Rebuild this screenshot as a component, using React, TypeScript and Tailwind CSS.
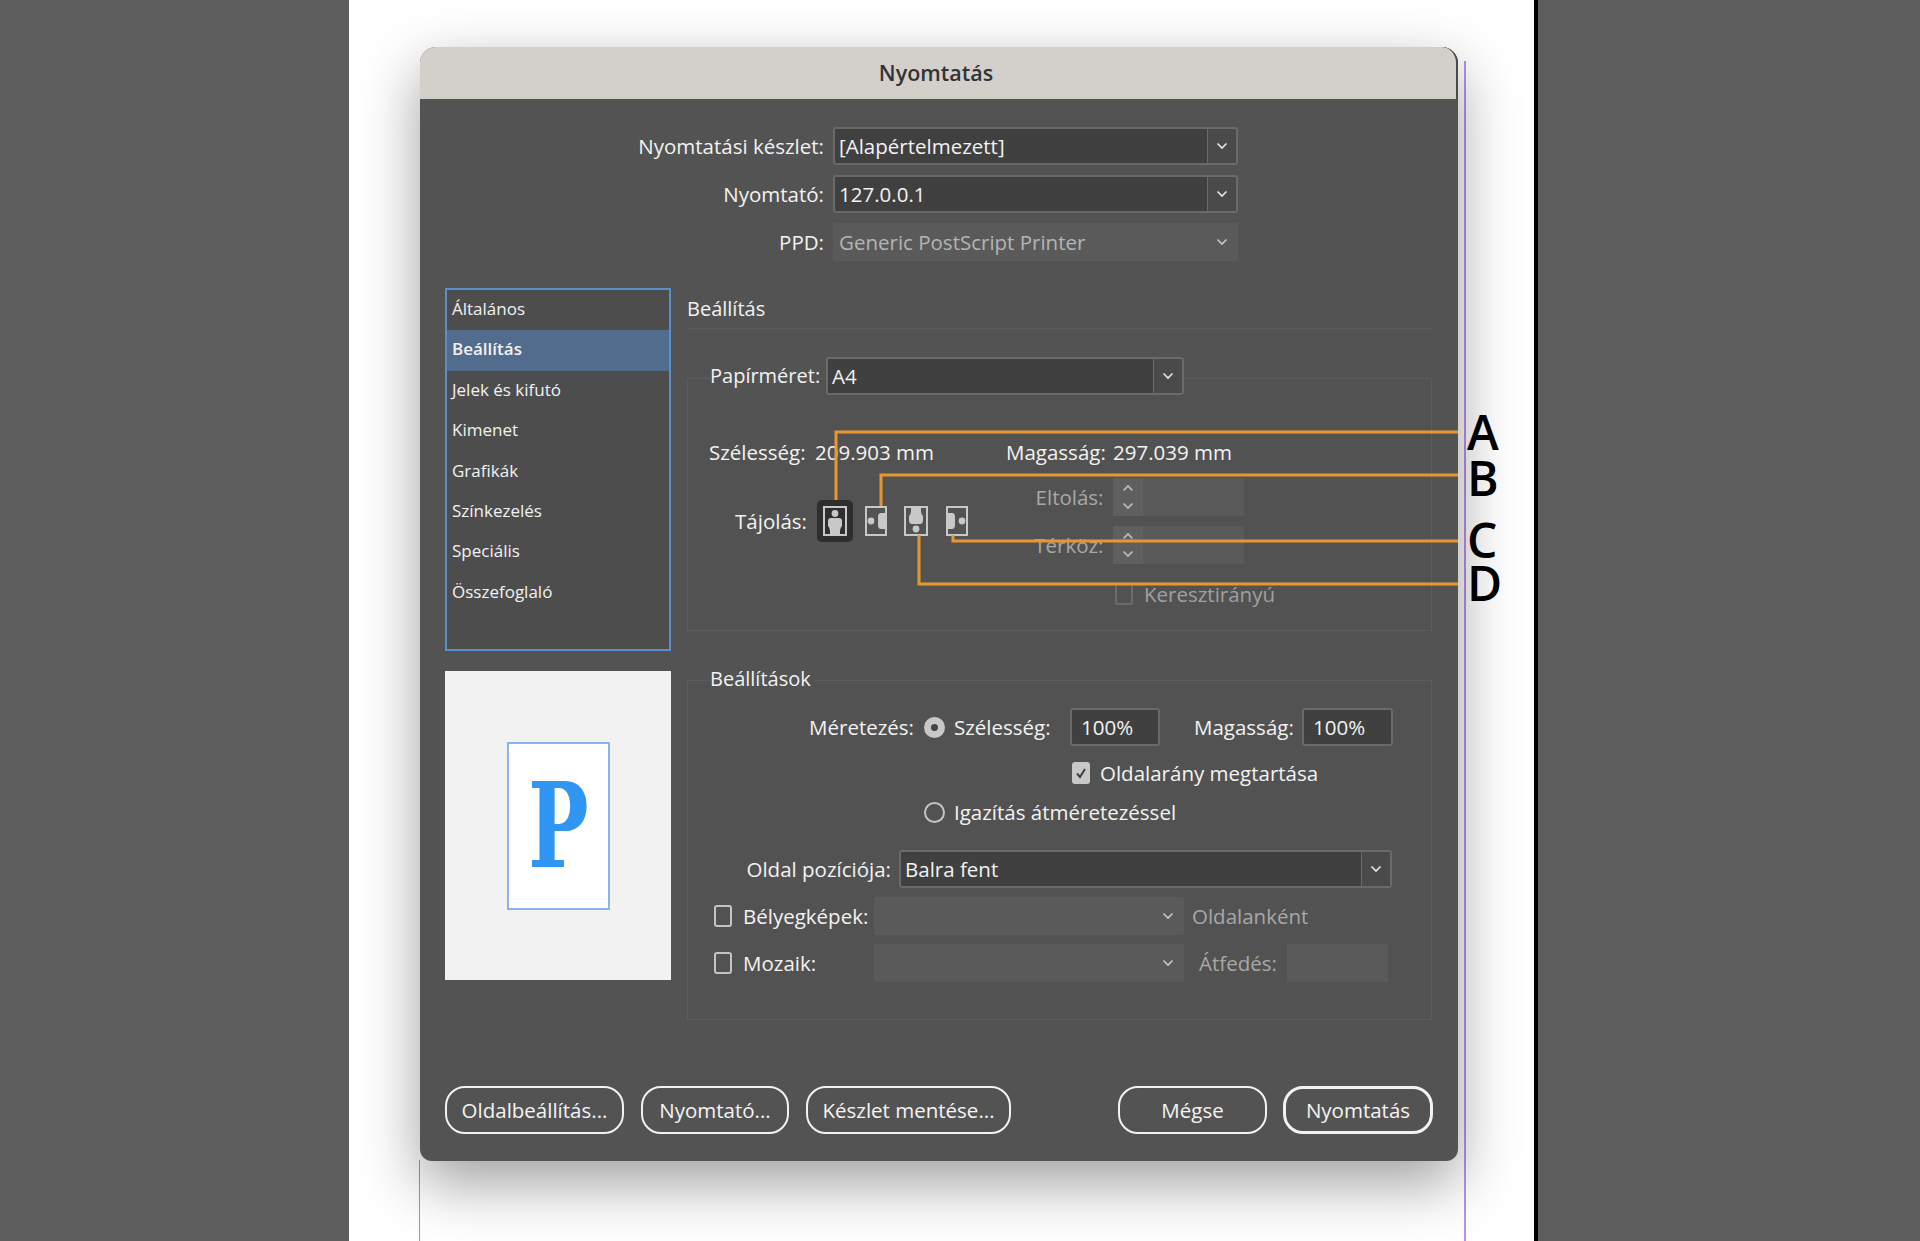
const font = "font-['Open_Sans','Liberation_Sans',sans-serif]";

function Chevron({ className = "", up = false }: { className?: string; up?: boolean }) {
  return (
    <svg width="12" height="8" viewBox="0 0 12 8" className={className}>
      <path d={up ? "M1.5 6.5 L6 2 L10.5 6.5" : "M1.5 1.5 L6 6 L10.5 1.5"} fill="none" stroke="currentColor" strokeWidth="1.6" />
    </svg>
  );
}

function Select({ value, w, h = "h-[38px]", arrow = "w-[29px]" }: { value: string; w: string; h?: string; arrow?: string }) {
  return (
    <div className={`flex ${w} ${h} shrink-0 rounded-[3px] border-2 border-[#6a6a6a] bg-[#404040]`}>
      <div className="flex-1 pl-[4px] leading-[34px] text-[#f2f2f2]">{value}</div>
      <div className={`flex ${arrow} items-center justify-center border-l border-[#6a6a6a] bg-[#4a4a4a] text-[#e6e6e6]`}>
        <Chevron />
      </div>
    </div>
  );
}

function DisabledSelect({ value, w, h = "h-[38px]" }: { value?: string; w: string; h?: string }) {
  return (
    <div className={`flex ${w} ${h} shrink-0 items-center justify-between rounded-[2px] bg-[#5a5a5a] pl-[6px] pr-[10px] text-[#b4b4b4]`}>
      <span>{value}</span>
      <Chevron className="text-[#c8c8c8]" />
    </div>
  );
}

function Spinner() {
  return (
    <div className="flex h-[38px] w-[131px] bg-[#5a5a5a]">
      <div className="flex w-[30px] flex-col items-center justify-center gap-[10px] bg-[#5f5f5f] text-[#c0c0c0]">
        <Chevron up />
        <Chevron />
      </div>
    </div>
  );
}

function Orient({ kind }: { kind: "a" | "b" | "c" | "d" }) {
  const land = kind === "b" || kind === "d";
  return (
    <svg width={land ? 22 : 24} height="30" viewBox={land ? "0 0 22 30" : "0 0 24 30"}>
      <rect x="1" y="1" width={land ? 20 : 22} height="28" fill="none" stroke="#c8c8c8" strokeWidth="2" />
      {kind === "a" && (
        <>
          <circle cx="12" cy="7.5" r="3.4" fill="#c8c8c8" />
          <path d="M5 15 Q5 12 8 12 L16 12 Q19 12 19 15 L19 20 Q17 22 17 25 L17 28 L7 28 L7 25 Q7 22 5 20 Z" fill="#c8c8c8" />
        </>
      )}
      {kind === "c" && (
        <>
          <circle cx="12" cy="23" r="3.4" fill="#c8c8c8" />
          <path d="M5 14 Q5 18 8 18 L16 18 Q19 18 19 14 L19 10 Q17 8 17 5 L17 2 L7 2 L7 5 Q7 8 5 10 Z" fill="#c8c8c8" />
        </>
      )}
      {kind === "b" && (
        <>
          <circle cx="6" cy="15" r="3.4" fill="#c8c8c8" />
          <path d="M20 7 L16 7 Q13 7 13 11 L13 19 Q13 23 16 23 L20 23 Z" fill="#c8c8c8" />
        </>
      )}
      {kind === "d" && (
        <>
          <circle cx="16" cy="15" r="3.4" fill="#c8c8c8" />
          <path d="M2 7 L6 7 Q9 7 9 11 L9 19 Q9 23 6 23 L2 23 Z" fill="#c8c8c8" />
        </>
      )}
    </svg>
  );
}

function Box({ dim = false }: { dim?: boolean }) {
  return <div className={`h-[22px] w-[18px] shrink-0 rounded-[3px] border-2 ${dim ? "border-[#6c6c6c]" : "border-[#c4c4c4]"}`} />;
}

function Btn({ label, w, strong = false }: { label: string; w: string; strong?: boolean }) {
  return (
    <div
      className={`flex h-[48px] ${w} items-center justify-center rounded-[20px] ${strong ? "border-[3px]" : "border-2"} border-[#f2f2f2] text-[#f4f4f4]`}
    >
      {label}
    </div>
  );
}

const items = ["Általános", "Beállítás", "Jelek és kifutó", "Kimenet", "Grafikák", "Színkezelés", "Speciális", "Összefoglaló"];

export default function App() {
  return (
    <div className={`flex h-[1241px] w-[1920px] overflow-hidden text-[20.5px] leading-[28px] ${font}`}>
      <div className="w-[349px] shrink-0 bg-[#5e5e5e]" />
      <div className="relative w-[1185px] shrink-0 bg-white pl-[71px] pt-[47px]">
        <div className="absolute left-[70px] top-[1160px] h-[81px] w-px bg-[#b57de8]" />
        <div className="absolute left-[1115px] top-[61px] h-[1180px] w-[2px] bg-[#c08ee8]" />
        <div className="relative flex h-[1114px] w-[1038px] flex-col rounded-t-[16px] rounded-b-[12px] bg-[#535353] shadow-[0_22px_60px_rgba(0,0,0,0.38)]">
          <div className="flex h-[52px] shrink-0 items-center justify-center rounded-t-[16px] border-r-2 border-[#4a4a4a] bg-[#d3cfcb] pr-[4px] text-[21.5px] font-semibold text-[#333333]">Nyomtatás</div>

          <div className="mt-[28px] flex flex-col gap-[10px]">
            {[
              ["Nyomtatási készlet:", "[Alapértelmezett]"],
              ["Nyomtató:", "127.0.0.1"],
            ].map(([l, v]) => (
              <div key={l} className="flex items-center">
                <div className="w-[404px] text-right text-[#f2f2f2]">{l}</div>
                <div className="ml-[9px]">
                  <Select value={v} w="w-[405px]" />
                </div>
              </div>
            ))}
            <div className="flex items-center">
              <div className="w-[404px] text-right text-[#f2f2f2]">PPD:</div>
              <div className="ml-[9px]">
                <DisabledSelect value="Generic PostScript Printer" w="w-[405px]" />
              </div>
            </div>
          </div>

          <div className="mt-[27px] flex pl-[25px]">
            <div className="w-[226px] shrink-0">
              <div className="h-[363px] border-2 border-[#5b8fcb] bg-[#4d4d4d] text-[17px]">
                {items.map((t, i) => (
                  <div key={t} className={`h-[40.4px] pl-[5px] leading-[38px] text-[#f2f2f2] ${i === 1 ? "bg-[#516c8d] font-semibold" : ""}`}>
                    {t}
                  </div>
                ))}
              </div>
              <div className="mt-[20px] flex h-[309px] items-center justify-center bg-[#f2f2f2]">
                <div className="flex h-[168px] w-[103px] items-center justify-center overflow-hidden border-2 border-[#8ab4ea] bg-white font-['DejaVu_Serif',serif] text-[118px] font-bold leading-none text-[#2f96f3]">
                  <span className="block scale-x-[0.68]">P</span>
                </div>
              </div>
            </div>

            <div className="ml-[16px] w-[745px]">
              <div className="h-[41px] border-b border-[#5c5c5c] text-[20px] text-[#f2f2f2]">
                <div className="leading-[41px]">Beállítás</div>
              </div>

              <div className="mt-[49px] h-[253px] border border-[#5d5d5d] bg-[#525252]">
                <div className="-mt-[22px] flex items-center pl-[22px]">
                  <div className="w-[107px] whitespace-nowrap bg-[#535353] text-[20px] text-[#f2f2f2]">Papírméret:</div>
                  <div className="ml-[9px]">
                    <Select value="A4" w="w-[358px]" h="h-[38px]" />
                  </div>
                </div>
                <div className="mt-[43px] flex items-center pl-[21px] text-[#f2f2f2]">
                  <div className="w-[98px]">Szélesség:</div>
                  <div className="ml-[8px] w-[191px]">209.903 mm</div>
                  <div className="w-[98px]">Magasság:</div>
                  <div className="ml-[9px]">297.039 mm</div>
                </div>
                <div className="mt-[12px] flex items-center pl-[21px]">
                  <div className="w-[98px] text-right text-[#f2f2f2]">Tájolás:</div>
                  <div className="ml-[10px] flex w-[157.5px] items-center gap-[4.5px]">
                    <div className="flex h-[42px] w-[36px] items-center justify-center rounded-[5px] bg-[#2e2e2e]">
                      <Orient kind="a" />
                    </div>
                    <div className="flex w-[36px] justify-center">
                      <Orient kind="b" />
                    </div>
                    <div className="flex w-[36px] justify-center">
                      <Orient kind="c" />
                    </div>
                    <div className="flex w-[36px] justify-center">
                      <Orient kind="d" />
                    </div>
                  </div>
                  <div className="flex flex-col gap-[10px]">
                    <div className="flex items-center">
                      <div className="w-[129px] text-right text-[#a8a8a8]">Eltolás:</div>
                      <div className="ml-[9px]">
                        <Spinner />
                      </div>
                    </div>
                    <div className="flex items-center">
                      <div className="w-[129px] text-right text-[#a8a8a8]">Térköz:</div>
                      <div className="ml-[9px]">
                        <Spinner />
                      </div>
                    </div>
                  </div>
                </div>
                <div className="mt-[16px] flex items-center pl-[427px]">
                  <Box dim />
                  <div className="ml-[11px] text-[#a0a0a0]">Keresztirányú</div>
                </div>
              </div>

              <div className="mt-[49px] h-[340px] border border-[#5d5d5d] bg-[#525252]">
                <div className="-mt-[16px] ml-[22px] w-fit bg-[#535353] pr-[4px] text-[20px] text-[#f2f2f2]">Beállítások</div>
                <div className="mt-[15px] flex items-center text-[#f2f2f2]">
                  <div className="w-[226px] text-right">Méretezés:</div>
                  <div className="ml-[10px] flex h-[21px] w-[21px] items-center justify-center rounded-full bg-[#c8c8c8]">
                    <div className="h-[7px] w-[7px] rounded-full bg-[#444444]" />
                  </div>
                  <div className="ml-[9px] w-[97px]">Szélesség:</div>
                  <div className="ml-[19px] h-[38px] w-[90px] rounded-[3px] border-2 border-[#6a6a6a] bg-[#404040] pl-[9px] leading-[35px]">100%</div>
                  <div className="ml-[34px] w-[99px]">Magasság:</div>
                  <div className="ml-[9px] h-[38px] w-[91px] rounded-[3px] border-2 border-[#6a6a6a] bg-[#404040] pl-[9px] leading-[35px]">100%</div>
                </div>
                <div className="mt-[16px] flex h-[22px] items-center pl-[384px] text-[#f2f2f2]">
                  <div className="flex h-[22px] w-[18px] items-center justify-center rounded-[3px] bg-[#c8c8c8]">
                    <svg width="14" height="14" viewBox="0 0 14 14">
                      <path d="M3 7.5 L6 11 L11 3" fill="none" stroke="#404040" strokeWidth="2" />
                    </svg>
                  </div>
                  <div className="ml-[10px]">Oldalarány megtartása</div>
                </div>
                <div className="mt-[16px] flex h-[24px] items-center pl-[236px] text-[#f2f2f2]">
                  <div className="h-[21px] w-[21px] rounded-full border-2 border-[#c4c4c4]" />
                  <div className="ml-[9px]">Igazítás átméretezéssel</div>
                </div>
                <div className="mt-[26px] flex items-center text-[#f2f2f2]">
                  <div className="w-[203px] text-right">Oldal pozíciója:</div>
                  <div className="ml-[8px]">
                    <Select value="Balra fent" w="w-[493px]" />
                  </div>
                </div>
                <div className="mt-[9px] flex items-center pl-[26px]">
                  <Box />
                  <div className="ml-[11px] w-[121px] text-[#f2f2f2]">Bélyegképek:</div>
                  <div className="ml-[10px]">
                    <DisabledSelect w="w-[310px]" />
                  </div>
                  <div className="ml-[8px] text-[#a8a8a8]">Oldalanként</div>
                </div>
                <div className="mt-[9px] flex items-center pl-[26px]">
                  <Box />
                  <div className="ml-[11px] w-[121px] text-[#f2f2f2]">Mozaik:</div>
                  <div className="ml-[10px]">
                    <DisabledSelect w="w-[310px]" />
                  </div>
                  <div className="ml-[15px] w-[78px] text-[#a8a8a8]">Átfedés:</div>
                  <div className="ml-[10px] h-[38px] w-[101px] bg-[#5a5a5a]" />
                </div>
              </div>
            </div>
          </div>

          <div className="mt-auto flex items-center pb-[27px] pl-[25px] pr-[25px]">
            <Btn label="Oldalbeállítás..." w="w-[179px]" />
            <div className="ml-[17px]">
              <Btn label="Nyomtató..." w="w-[148px]" />
            </div>
            <div className="ml-[17px]">
              <Btn label="Készlet mentése..." w="w-[205px]" />
            </div>
            <div className="ml-auto">
              <Btn label="Mégse" w="w-[149px]" />
            </div>
            <div className="ml-[16px]">
              <Btn label="Nyomtatás" w="w-[150px]" strong />
            </div>
          </div>
        </div>

        <svg className="absolute left-0 top-0" width="1185" height="1241" viewBox="0 0 1185 1241">
          <path
            d="M487 500 V432 H1109 M532 506 V475 H1109 M604 535 V541 H1109 M570 535 V584 H1109"
            fill="none"
            stroke="#e8972f"
            strokeWidth="3"
          />
        </svg>
        <div className="absolute left-[1118px] top-[412px] text-[48px] font-semibold leading-[40px] text-black">A</div>
        <div className="absolute left-[1118px] top-[458px] text-[48px] font-semibold leading-[40px] text-black">B</div>
        <div className="absolute left-[1118px] top-[520px] text-[48px] font-semibold leading-[40px] text-black">C</div>
        <div className="absolute left-[1118px] top-[563px] text-[48px] font-semibold leading-[40px] text-black">D</div>
      </div>
      <div className="w-[4px] shrink-0 bg-black" />
      <div className="flex-1 bg-[#5e5e5e]" />
    </div>
  );
}
